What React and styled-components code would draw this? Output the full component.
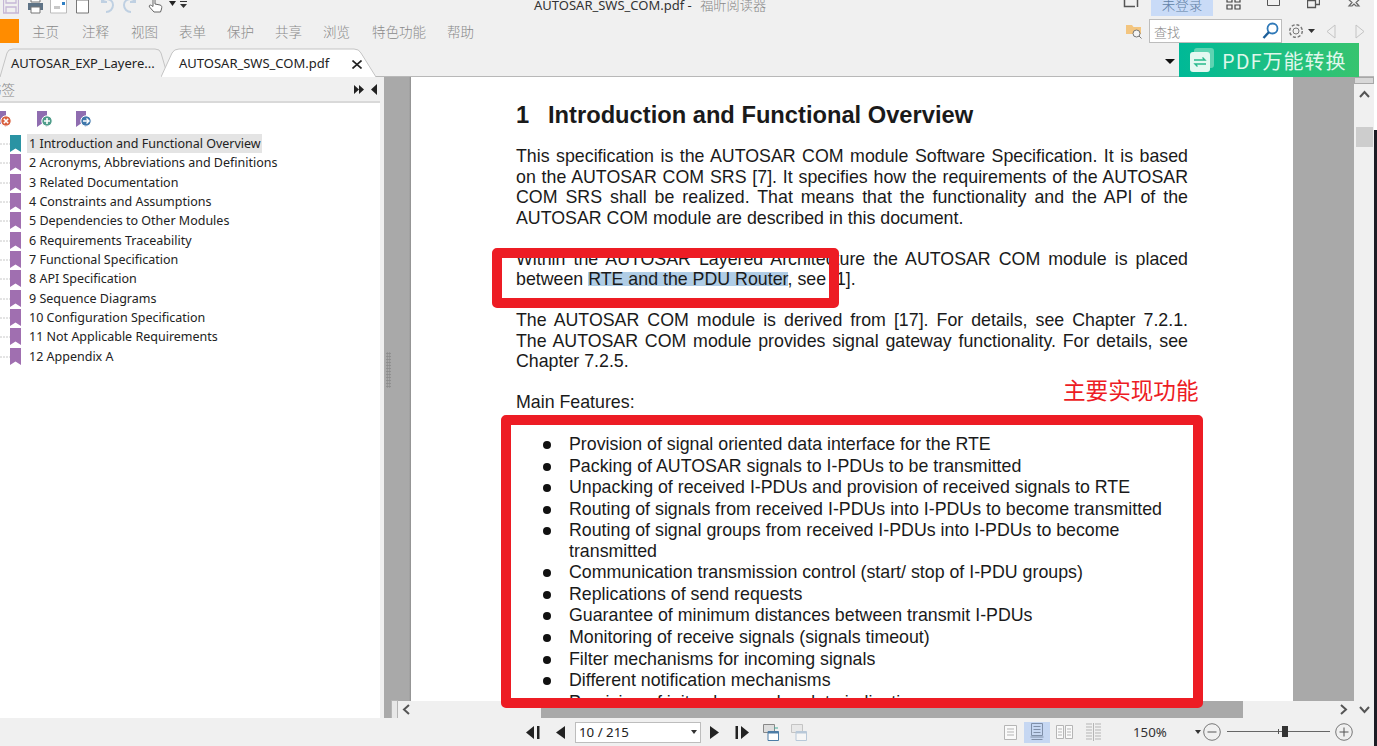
import React from "react";
import styled, { createGlobalStyle } from "styled-components";

const Global = createGlobalStyle`
  html, body { margin: 0; padding: 0; height: 100%; overflow: hidden; background: #fff; }
  #root { height: 746px; }
  * { box-sizing: border-box; }
`;

const UI = `"Noto Sans", "Noto Sans CJK SC", sans-serif`;
const CJK = `"Noto Sans CJK SC", sans-serif`;
const DOC = `"Liberation Sans", Arial, sans-serif`;

const Shell = styled.div`
  width: 1377px; height: 746px; display: flex; position: relative; overflow: hidden; background: #f0f0f0; font-family: ${UI};
`;
const Main = styled.div`width: 1374px; flex: none; display: flex; flex-direction: column; min-height: 0;`;
const EdgeStrip = styled.div`width: 3px; flex: none; background: linear-gradient(#fff 130px, #1c1c24 130px);`;

/* ---------- title bar ---------- */
const TitleBar = styled.div`
  height: 17px; flex: none; display: flex; align-items: flex-end; overflow: hidden;
`;
const QuickGroup = styled.div`
  width: 534px; flex: none; height: 30px; display: flex; align-items: flex-end; padding-bottom: 3px;
`;
const TitleIcon = styled.svg`
  display: block; flex: none; margin-left: ${p => p.$ml || 0}px; margin-bottom: ${p => p.$mb || 0}px;
`;
const TitleText = styled.div`
  width: 589px; flex: none; font-size: 13px; line-height: 16px; color: #333; margin-bottom: 4px; white-space: nowrap;
  span { font-family: ${CJK}; color: #888; font-size: 13.2px; font-weight: 300; margin-left: 5px; }
`;
const Login = styled.div`
  width: 62px; height: 16px; margin-left: 12px; margin-bottom: 1px; flex: none; background: #c9dbf7; color: #5f7fa5;
  font-family: ${CJK}; font-size: 13.5px; line-height: 8px; text-align: center; overflow: hidden; font-weight: 300;
`;

/* ---------- menu row ---------- */
const MenuRow = styled.div`
  height: 30px; flex: none; display: flex; align-items: center; position: relative;
`;
const Orange = styled.div`
  width: 19px; height: 24px; background: #ff8c00; flex: none; margin-right: 13px; margin-top: -2px;
`;
const MenuItem = styled.div`
  font-family: ${CJK}; font-size: 13.5px; color: #8a8a8a; font-weight: 300; width: ${p => p.$w}px; flex: none; margin-top: -3px; white-space: nowrap;
`;
const Spacer = styled.div`flex: 1;`;
const SearchBox = styled.div`
  width: 133px; height: 24px; background: #fff; border: 1px solid #bdbdbd; display: flex; align-items: center;
  justify-content: space-between; padding: 0 2px 0 4px; margin-left: 7px; align-self: flex-start; margin-top: 2px; flex: none;
`;
const SearchText = styled.span`font-family: ${CJK}; font-size: 13px; color: #8a8a8a; font-weight: 300;`;
const SearchGlass = styled.svg`display: block;`;
const MenuIcon = styled.svg`display: block; flex: none; margin-left: ${p => p.$ml || 0}px; margin-top: -2px;`;

/* ---------- tabs ---------- */
const TabRow = styled.div`
  height: 30px; flex: none; display: flex; align-items: flex-end; border-bottom: 1px solid #b8b8b8; position: relative;
`;
const Tab = styled.div`
  position: relative; height: 29px; width: ${p => p.$w}px; flex: none; margin-left: ${p => p.$ml || 0}px;
  display: flex; align-items: center; padding-left: ${p => p.$pl}px; font-size: 13px; color: #222; z-index: ${p => p.$active ? 2 : 1};
  margin-bottom: -1px;
`;
const TabShape = styled.svg`position: absolute; inset: 0; width: 100%; height: 100%;`;
const TabLabel = styled.span`position: relative; white-space: nowrap;`;
const TabClose = styled.svg`position: absolute; left: 191px; top: 12px;`;
const TabCaret = styled.div`
  width: 0; height: 0; border-left: 5px solid transparent; border-right: 5px solid transparent; border-top: 5px solid #111;
  margin-left: auto; margin-right: 4px; align-self: center; margin-top: 0;
`;
const Banner = styled.div`
  width: 180px; height: 34px; flex: none; margin-right: 15px; margin-top: -4px; margin-bottom: -1px; position: relative; z-index: 3;
  background: linear-gradient(90deg, #00b997, #37c46f); display: flex; align-items: center; padding-left: 11px; gap: 8px;
  color: #dff7ea; font-family: ${CJK}; font-size: 20px; letter-spacing: 1px; overflow: hidden; align-self: flex-end;
`;
const BannerIcon = styled.svg`display: block; flex: none;`;

/* ---------- body ---------- */
const Body = styled.div`flex: 1; min-height: 0; display: flex;`;
const Sidebar = styled.aside`width: 380px; flex: none; display: flex; flex-direction: column; background: #fff;`;
const SideHead = styled.div`
  height: 26px; flex: none; background: #f0f0f0; display: flex; align-items: center; padding-right: 3px;
  border-bottom: 2px solid #d9d9d9;
`;
const SideTitle = styled.div`
  font-family: ${CJK}; font-size: 13.5px; color: #888; margin-left: -12px; font-weight: 300; white-space: nowrap;
`;
const SideArrows = styled.svg`display: block; flex: none;`;
const SideTools = styled.div`height: 31px; flex: none; display: flex; align-items: center; margin-left: -5px;`;
const Tree = styled.ul`list-style: none; margin: 0; padding: 0; position: relative;`;
const TreeRow = styled.li`
  height: 19.33px; display: flex; align-items: center; position: relative; padding-left: 27px; font-size: 12.5px; color: #222;
`;
const RowLabel = styled.span`
  background: ${p => p.$sel ? "#e4e4e4" : "transparent"}; padding: 0 1px 0 2px; line-height: 19px; white-space: nowrap;
`;
const Mark = styled.svg`position: absolute; left: 0; top: 0;`;

const Splitter = styled.div`width: 4px; flex: none; background: #efefef;`;
const Viewer = styled.div`flex: 1; min-width: 0; display: flex; background: #a9a9a9;`;
const LeftStrip = styled.div`width: 7px; flex: none; background: #a9a9a9; position: relative;`;
const Grip = styled.div`
  position: absolute; left: 2px; top: 275px; width: 5px; height: 36px;
  background-image: radial-gradient(#8c8c8c 0.8px, transparent 1px); background-size: 2.5px 3px;
`;
const ViewCol = styled.div`flex: 1; min-width: 0; display: flex; flex-direction: column;`;
const DocArea = styled.div`flex: 1; min-height: 0; display: flex; overflow: hidden;`;
const InnerGutter = styled.div`width: 20px; flex: none; background: linear-gradient(90deg, #a9a9a9 18px, #8f8f8f);`;
const Page = styled.div`
  width: 882px; flex: none; background: #fff; padding: 25px 105px 0 105px; font-family: ${DOC}; color: #1a1a1a;
  overflow: hidden;
`;
const RightGutter = styled.div`width: 61px; flex: none; background: #a9a9a9;`;
const VScroll = styled.div`
  width: 20px; flex: none; background: #f0f0f0; display: flex; flex-direction: column; align-items: center; position: relative;
`;
const VTop = styled.div`width: 20px; height: 7px; background: #d8d8d8; border: 1px solid #a8a8a8;`;
const VChev = styled.div`margin-top: 5px;`;
const VThumb = styled.div`width: 17px; height: 20px; background: #cdcdcd; margin-top: 25px;`;

const H1 = styled.h1`
  margin: 0 0 17px 0; font-size: 23.7px; line-height: 27px; font-weight: 700; color: #1a1a1a; white-space: pre;
`;
const H1Num = styled.span`display: inline-block; width: 32px;`;
const Para = styled.p`
  margin: 0 0 20.4px 0; font-size: 17.8px; line-height: 20.55px; text-align: justify;
`;
const FullLine = styled.span`display: block; text-align-last: justify;`;
const Highlight = styled.span`
  background: linear-gradient(transparent 16%, #b0cde6 16%, #b0cde6 86%, transparent 86%);
`;
const Bullets = styled.ul`list-style: none; margin: 0; padding: 1px 0 0 0; font-size: 17.8px; line-height: 20.55px;`;
const Bullet = styled.li`
  position: relative; padding-left: 53px; margin-bottom: 1px;
  &::before { content: ""; position: absolute; left: 27px; top: 7px; width: 8px; height: 8px; border-radius: 50%; background: #111; }
`;

const HScroll = styled.div`height: 17px; flex: none; display: flex; background: #f0f0f0; align-items: stretch;`;
const HEnd = styled.div`
  width: 7px; margin-top: -1px; background: #e8e8e8; border: 1px solid #b5b5b5; border-bottom: none; flex: none;
`;
const HChev = styled.div`width: ${p => p.$w}px; flex: none; display: flex; align-items: center; justify-content: ${p => p.$j || "flex-start"}; padding: 0 ${p => p.$pad || 0}px;`;
const HThumb = styled.div`width: 702px; flex: none; background: #a9a9a9;`;

/* ---------- status bar ---------- */
const Status = styled.div`
  height: 28px; flex: none; display: flex; align-items: center; background: #f0f0f0; position: relative;
`;
const StatusIcon = styled.svg`display: block; flex: none; margin-left: ${p => p.$ml || 0}px;`;
const PageInput = styled.div`
  width: 126px; height: 21px; flex: none; margin-left: 10px; background: #fff; border: 1px solid #bdbdbd; display: flex; align-items: center;
  justify-content: space-between; font-size: 13.3px; color: #222; padding: 0 3px 0 3px;
`;
const Caret = styled.div`
  width: 0; height: 0; flex: none; border-left: 3.5px solid transparent; border-right: 3.5px solid transparent; border-top: 4px solid #333;
  margin-left: ${p => p.$ml || 0}px;
`;
const ViewBtn = styled.div`
  width: 26px; height: 21px; flex: none; margin-left: ${p => p.$ml || 0}px; background: ${p => p.$on ? "#c6d7f2" : "transparent"};
  display: flex; align-items: center; justify-content: center;
`;
const Zoom = styled.div`width: 35px; flex: none; margin-left: ${p => p.$ml}px; font-size: 13.3px; color: #333; white-space: nowrap;`;
const Slider = styled.div`
  width: 103px; height: 16px; flex: none; margin-left: 6px; position: relative;
  &::before { content: ""; position: absolute; left: 0; right: 0; top: 7px; height: 1px; background: #666; }
`;
const SliderTick = styled.div`position: absolute; left: 51px; top: 5px; width: 1px; height: 5px; background: #555;`;
const SliderThumb = styled.div`position: absolute; left: 55px; top: 2px; width: 6px; height: 11px; background: #333;`;

/* ---------- annotations ---------- */
const RedBox = styled.div`
  position: absolute; left: ${p => p.$x}px; top: ${p => p.$y}px; width: ${p => p.$w}px; height: ${p => p.$h}px;
  border: 10px solid #ed1c24; border-radius: 5px; z-index: 10; pointer-events: none;
`;
const RedLabel = styled.div`
  position: absolute; left: 1063px; top: 374px; color: #ed1c24; font-family: ${CJK}; font-size: 22.6px; line-height: 32px; z-index: 10; white-space: nowrap;
`;

/* ---------- icons ---------- */
const ChevSvg = styled.svg`display: block;`;
const Chevron = ({ dir = "left", c = "#555" }) => {
  const d = { left: "M8 2 3 6.5 8 11", right: "M3 2 8 6.5 3 11", up: "M2 8 6.5 3 11 8", down: "M2 4 6.5 9 11 4" }[dir];
  return <ChevSvg width="13" height="13" viewBox="0 0 13 13"><path d={d} fill="none" stroke={c} strokeWidth="2" /></ChevSvg>;
};
const Bookmark = ({ c }) => (
  <Mark width="27" height="20" viewBox="0 0 27 20">
    <path d="M0 10H10" stroke="#c8c8c8" strokeDasharray="2 1" />
    <path d="M10 1H21V18L15.500 14.500 10 18Z" fill={c} />
  </Mark>
);
const ToolMark = ({ c, badge, glyph, ml }) => (
  <TitleIcon width="17" height="18" viewBox="0 0 17 18" $ml={ml}>
    <path d="M1 1H11V17L6 13.500 1 17Z" fill={c} />
    <circle cx="11" cy="11" r="5.200" fill={badge} stroke="#fff" />
    {glyph === "plus" && <path d="M8 11H14M11 8V14" stroke="#fff" strokeWidth="1.600" />}
    {glyph === "x" && <path d="M8.800 8.800 13.200 13.200M13.200 8.800 8.800 13.200" stroke="#fff" strokeWidth="1.600" />}
    {glyph === "arrow" && <path d="M8 11H14M11.500 8.500 14 11 11.500 13.500" fill="none" stroke="#fff" strokeWidth="1.400" />}
  </TitleIcon>
);

const tree = [
  "1 Introduction and Functional Overview",
  "2 Acronyms, Abbreviations and Definitions",
  "3 Related Documentation",
  "4 Constraints and Assumptions",
  "5 Dependencies to Other Modules",
  "6 Requirements Traceability",
  "7 Functional Specification",
  "8 API Specification",
  "9 Sequence Diagrams",
  "10 Configuration Specification",
  "11 Not Applicable Requirements",
  "12 Appendix A",
];

const features = [
  "Provision of signal oriented data interface for the RTE",
  "Packing of AUTOSAR signals to I-PDUs to be transmitted",
  "Unpacking of received I-PDUs and provision of received signals to RTE",
  "Routing of signals from received I-PDUs into I-PDUs to become transmitted",
  "Routing of signal groups from received I-PDUs into I-PDUs to become transmitted",
  "Communication transmission control (start/ stop of I-PDU groups)",
  "Replications of send requests",
  "Guarantee of minimum distances between transmit I-PDUs",
  "Monitoring of receive signals (signals timeout)",
  "Filter mechanisms for incoming signals",
  "Different notification mechanisms",
  "Provision of init values and update indication",
];

const menus = [["主页", 50], ["注释", 49], ["视图", 48], ["表单", 48], ["保护", 48], ["共享", 48], ["浏览", 49], ["特色功能", 75], ["帮助", 40]];

export default function App() {
  return (
    <Shell>
      <Global />
      <Main>
        <TitleBar>
          <QuickGroup>
            <TitleIcon width="16" height="18" viewBox="0 0 16 18" $ml={3}><path d="M.5 1h15v16H.5z M3 1v6h10V1 M3 11h10v6H3z" fill="none" stroke="#c5b7d6" strokeWidth="1.300" /></TitleIcon>
            <TitleIcon width="17" height="18" viewBox="0 0 17 18" $ml={8}><path d="M4 1h9v5H4z" fill="#fff" stroke="#777" /><path d="M1 7h15v7H1z" fill="#5e7386" /><path d="M4 11h9v6H4z" fill="#fff" stroke="#777" /></TitleIcon>
            <TitleIcon width="17" height="18" viewBox="0 0 17 18" $ml={6}><path d="M.5 1h16v16H.5z" fill="#fff" stroke="#bbb" /><path d="M4 10h6v3H4z" fill="#c8c8c8" /><path d="M12 6h3v3h-3z" fill="#2f7fc4" /></TitleIcon>
            <TitleIcon width="15" height="18" viewBox="0 0 15 18" $ml={8}><path d="M1.500 4h12v13h-12z" fill="#fff" stroke="#777" /><path d="M3 0h3v3H3z" fill="#e0533d" /></TitleIcon>
            <TitleIcon width="17" height="18" viewBox="0 0 17 18" $ml={8}><path d="M4 5C9 1 15 4 15 9c0 4-3 7-7 7M4 1v5h5" fill="none" stroke="#bfd0e2" strokeWidth="2" /></TitleIcon>
            <TitleIcon width="17" height="18" viewBox="0 0 17 18" $ml={7}><path d="M13 5C8 1 2 4 2 9c0 4 3 7 7 7M13 1v5H8" fill="none" stroke="#bfd0e2" strokeWidth="2" /></TitleIcon>
            <TitleIcon width="16" height="18" viewBox="0 0 16 18" $ml={9}><path d="M5 1.500c1-1 2 0 2 1V8l5 1c2 .5 2 2 1.500 4l-1 3H6L1.500 11c-1-1.500.5-2.500 2-1.500L5 10.500z" fill="#fff" stroke="#666" /></TitleIcon>
            <TitleIcon width="7" height="5" viewBox="0 0 7 5" $ml={5} $mb={8}><path d="M0 0h7L3.500 5z" fill="#222" /></TitleIcon>
            <TitleIcon width="7" height="7" viewBox="0 0 7 7" $ml={4} $mb={6}><path d="M0 0h7v1H0z M0 3h7L3.500 7z" fill="#333" /></TitleIcon>
          </QuickGroup>
          <TitleText>AUTOSAR_SWS_COM.pdf - <span>福昕阅读器</span></TitleText>
          <TitleIcon width="16" height="12" viewBox="0 0 16 12" $mb={9}><path d="M5 0H1.500v10.500H12 M14.500 0v11" fill="none" stroke="#555" strokeWidth="1.500" /></TitleIcon>
          <Login>未登录</Login>
          <TitleIcon width="15" height="12" viewBox="0 0 15 12" $ml={13} $mb={7}><path d="M1 0h5v4H1z M9 0h5v4H9z M1 7h5v4H1z M9 7h5v4H9z" fill="none" stroke="#444" strokeWidth="1.200" /></TitleIcon>
          <TitleIcon width="13" height="8" viewBox="0 0 13 8" $ml={26} $mb={11}><path d="M.5 0v7.500h12V0" fill="none" stroke="#555" /></TitleIcon>
          <TitleIcon width="13" height="12" viewBox="0 0 13 12" $ml={27} $mb={8}><path d="M.5 3.500h8v7h-8z M3.500 3V.5h9v7H9" fill="none" stroke="#555" strokeWidth="1.300" /></TitleIcon>
          <TitleIcon width="14" height="9" viewBox="0 0 14 9" $ml={27} $mb={10}><path d="M0 0 5 4.500 2 8H5L7 6 9 8h3L9 4.500 14 0" fill="none" stroke="#666" strokeWidth="1.200" /></TitleIcon>
        </TitleBar>

        <MenuRow>
          <Orange />
          {menus.map(([m, w]) => <MenuItem key={m} $w={w}>{m}</MenuItem>)}
          <Spacer />
          <MenuIcon width="16" height="16" viewBox="0 0 16 16">
            <path d="M0 2h6l1.500 2H15v7H0z" fill="#f3c57f" /><circle cx="10.500" cy="10.500" r="3.500" fill="#f4f4f4" stroke="#777" /><path d="m13 13 2.500 2.500" stroke="#777" />
          </MenuIcon>
          <SearchBox>
            <SearchText>查找</SearchText>
            <SearchGlass width="17" height="18" viewBox="0 0 17 18">
              <circle cx="10.500" cy="6.500" r="5" fill="#fff" stroke="#2f79b8" strokeWidth="1.800" /><path d="M7 10 1.500 16" stroke="#1c5f9a" strokeWidth="2.400" />
            </SearchGlass>
          </SearchBox>
          <MenuIcon width="16" height="16" viewBox="0 0 16 16" $ml={6}>
            <circle cx="8" cy="8" r="3" fill="none" stroke="#777" /><circle cx="8" cy="8" r="6.300" fill="none" stroke="#777" strokeDasharray="3 1.900" strokeWidth="1.400" />
          </MenuIcon>
          <MenuIcon width="7" height="4" viewBox="0 0 7 4" $ml={4}><path d="M0 0h7L3.500 4z" fill="#333" /></MenuIcon>
          <MenuIcon width="10" height="15" viewBox="0 0 10 15" $ml={11}><path d="M9 1 1 7.500 9 14z" fill="none" stroke="#c4c4c4" /></MenuIcon>
          <MenuIcon width="10" height="15" viewBox="0 0 10 15" $ml={19}><path d="M1 1 9 7.500 1 14z" fill="none" stroke="#c4c4c4" /></MenuIcon>
          <MenuIcon width="9" height="4" viewBox="0 0 9 4" />
        </MenuRow>

        <TabRow>
          <Tab $w={168} $pl={11}>
            <TabShape viewBox="0 0 168 29" preserveAspectRatio="none"><path d="M0 29 7 5Q8 1 13 1H155Q160 1 161 5L168 29" fill="#f0f0f0" stroke="#c4c4c4" /></TabShape>
            <TabLabel>AUTOSAR_EXP_Layere...</TabLabel>
          </Tab>
          <Tab $w={215} $ml={-7} $pl={18} $active>
            <TabShape viewBox="0 0 215 29" preserveAspectRatio="none"><path d="M0 29 11 5Q13 1 18 1H193Q198 1 200 5L215 29" fill="#fff" stroke="#c4c4c4" /></TabShape>
            <TabLabel>AUTOSAR_SWS_COM.pdf</TabLabel>
            <TabClose width="10" height="9" viewBox="0 0 10 9"><path d="M.5.5 9.500 8.500M9.500.5.500 8.500" stroke="#222" strokeWidth="1.600" /></TabClose>
          </Tab>
          <TabCaret />
          <Banner>
            <BannerIcon width="24" height="24" viewBox="0 0 24 24">
              <rect x="4" y="0" width="20" height="20" rx="3" fill="#5fd3b2" />
              <rect x="0" y="4" width="20" height="20" rx="3" fill="#e4f8f1" />
              <path d="M4 12H15L12.500 9.500M16 16H5L7.500 18.500" fill="none" stroke="#27b98c" strokeWidth="1.400" />
            </BannerIcon>
            PDF万能转换
          </Banner>
        </TabRow>

        <Body>
          <Sidebar>
            <SideHead>
              <SideTitle>书签</SideTitle>
              <Spacer />
              <SideArrows width="23" height="11" viewBox="0 0 23 11"><path d="M0 1 5 5.500 0 10zM5 1 10 5.500 5 10zM23 0V11L17 5.500z" fill="#222" /></SideArrows>
            </SideHead>
            <SideTools>
              <ToolMark c="#8f6db0" badge="#d9603f" glyph="x" />
              <ToolMark c="#8f6db0" badge="#4f9d8a" glyph="plus" ml={24} />
              <ToolMark c="#8f6db0" badge="#3f77ab" glyph="arrow" ml={22} />
            </SideTools>
            <Tree>
              {tree.map((t, i) => (
                <TreeRow key={t}>
                  <Bookmark c={i === 0 ? "#2a93a3" : "#a06fb0"} />
                  <RowLabel $sel={i === 0}>{t}</RowLabel>
                </TreeRow>
              ))}
            </Tree>
          </Sidebar>
          <Splitter />
          <Viewer>
            <LeftStrip><Grip /></LeftStrip>
            <ViewCol>
              <DocArea>
                <InnerGutter />
                <Page>
                  <H1><H1Num>1</H1Num>Introduction and Functional Overview</H1>
                  <Para>This specification is the AUTOSAR COM module Software Specification. It is based on the AUTOSAR COM SRS [7]. It specifies how the requirements of the AUTOSAR COM SRS shall be realized. That means that the functionality and the API of the AUTOSAR COM module are described in this document.</Para>
                  <Para>Within the AUTOSAR Layered Architecture the AUTOSAR COM module is placed between <Highlight>RTE and the PDU Router</Highlight>, see [1].</Para>
                  <Para><FullLine>The AUTOSAR COM module is derived from [17]. For details, see Chapter 7.2.1.</FullLine>The AUTOSAR COM module provides signal gateway functionality. For details, see Chapter 7.2.5.</Para>
                  <Para>Main Features:</Para>
                  <Bullets>
                    {features.map(f => <Bullet key={f}>{f}</Bullet>)}
                  </Bullets>
                </Page>
                <RightGutter />
                <VScroll>
                  <VTop />
                  <VChev><Chevron dir="up" /></VChev>
                  <VThumb />
                </VScroll>
              </DocArea>
              <HScroll>
                <HEnd />
                <HChev $w={143} $pad={3}><Chevron dir="left" /></HChev>
                <HThumb />
                <HChev $w={111} $j="flex-end" $pad={3}><Chevron dir="right" /></HChev>
                <HChev $w={20} $j="center"><Chevron dir="down" /></HChev>
              </HScroll>
            </ViewCol>
          </Viewer>
        </Body>

        <Status>
          <StatusIcon width="15" height="15" viewBox="0 0 15 15" $ml={525}><path d="M9 1 1 7.500 9 14z M12 1h2.500v13H12z" fill="#222" /></StatusIcon>
          <StatusIcon width="9" height="15" viewBox="0 0 9 15" $ml={16}><path d="M9 1 0 7.500 9 14z" fill="#222" /></StatusIcon>
          <PageInput>10 / 215<Caret /></PageInput>
          <StatusIcon width="9" height="15" viewBox="0 0 9 15" $ml={9}><path d="M0 1 9 7.500 0 14z" fill="#222" /></StatusIcon>
          <StatusIcon width="15" height="15" viewBox="0 0 15 15" $ml={16}><path d="M6 1 14 7.500 6 14z M.5 1H3v13H.5z" fill="#222" /></StatusIcon>
          <StatusIcon width="16" height="17" viewBox="0 0 16 17" $ml={13}><path d="M.5.5h11v8H.5z" fill="#ddd" stroke="#888" /><path d="M5 7.500h10.500v9H5z" fill="#fff" stroke="#4d7da6" /><path d="M5 7.500h10.500v2H5z" fill="#4d7da6" /><path d="M11 4h4" stroke="#4a9" /></StatusIcon>
          <StatusIcon width="16" height="17" viewBox="0 0 16 17" $ml={12}><path d="M.5.5h11v8H.5z" fill="#e8e8e8" stroke="#c4c4c4" /><path d="M5 7.500h10.500v9H5z" fill="#f6f6f6" stroke="#b8c8d8" /><path d="M5 7.500h10.500v2H5z" fill="#b8c8d8" /></StatusIcon>
          <ViewBtn $ml={190}><StatusIcon width="13" height="15" viewBox="0 0 13 15"><path d="M.5.5h12v14H.5z M3 4h7M3 7h7M3 10h7" fill="#fafafa" stroke="#b5b5b5" /></StatusIcon></ViewBtn>
          <ViewBtn $ml={1} $on><StatusIcon width="14" height="18" viewBox="0 0 14 18"><path d="M1.500.5h11v12h-11z M3.500 3.500h7M3.500 6.500h7M3.500 9.500h7 M.5 14h13 M1.500 16.500h11" fill="none" stroke="#7f8fa8" /></StatusIcon></ViewBtn>
          <ViewBtn $ml={1}><StatusIcon width="17" height="14" viewBox="0 0 17 14"><path d="M.5.5h7v13h-7z M9.500.5h7v13h-7z M2 4h4M2 7h4M2 10h4M11 4h4M11 7h4M11 10h4" fill="#fafafa" stroke="#b5b5b5" /></StatusIcon></ViewBtn>
          <ViewBtn $ml={3}><StatusIcon width="15" height="18" viewBox="0 0 15 18"><path d="M0 1h6M0 4h6M0 7h6M0 10h6M9 1h6M9 4h6M9 7h6M9 10h6M0 13h6M9 13h6M0 16h6M9 16h6M7.500 0v18" fill="none" stroke="#b5b5b5" /></StatusIcon></ViewBtn>
          <Zoom $ml={27}>150%</Zoom>
          <Caret $ml={27} />
          <StatusIcon width="18" height="18" viewBox="0 0 18 18" $ml={2}><circle cx="9" cy="9" r="8.300" fill="none" stroke="#777" /><path d="M4.500 9h9" stroke="#555" /></StatusIcon>
          <Slider><SliderTick /><SliderThumb /></Slider>
          <StatusIcon width="18" height="18" viewBox="0 0 18 18" $ml={5}><circle cx="9" cy="9" r="8.300" fill="none" stroke="#777" /><path d="M4.500 9h9M9 4.500v9" stroke="#555" /></StatusIcon>
        </Status>
      </Main>
      <EdgeStrip />

      <RedBox $x={492} $y={248} $w={347} $h={60} />
      <RedBox $x={501} $y={415} $w={702} $h={293} />
      <RedLabel>主要实现功能</RedLabel>
    </Shell>
  );
}
